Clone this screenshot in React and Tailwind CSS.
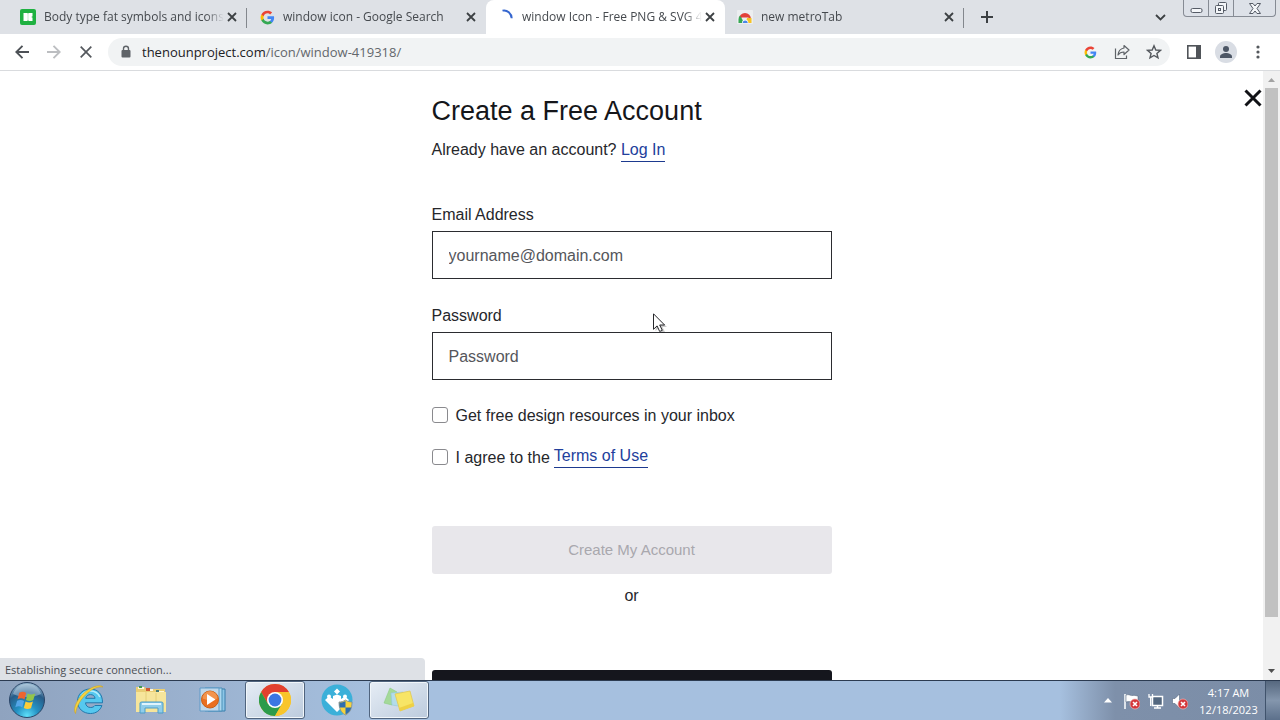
import React from "react";

const UI = "font-['Open_Sans','Noto_Sans',sans-serif]";

function GoogleG({ size }) {
  return (
    <svg width={size} height={size} viewBox="0 0 24 24" aria-hidden="true">
      <path fill="#4285F4" d="M22.56 12.25c0-.78-.07-1.53-.2-2.25H12v4.26h5.92c-.26 1.37-1.04 2.53-2.21 3.31v2.77h3.57c2.08-1.92 3.28-4.74 3.28-8.09z" />
      <path fill="#34A853" d="M12 23c2.97 0 5.46-.98 7.28-2.66l-3.57-2.77c-.98.66-2.23 1.06-3.71 1.06-2.86 0-5.29-1.93-6.16-4.53H2.18v2.84C3.99 20.53 7.7 23 12 23z" />
      <path fill="#FBBC05" d="M5.84 14.09c-.22-.66-.35-1.36-.35-2.09s.13-1.43.35-2.09V7.07H2.18C1.43 8.55 1 10.22 1 12s.43 3.45 1.18 4.93l3.66-2.84z" />
      <path fill="#EA4335" d="M12 5.38c1.62 0 3.06.56 4.21 1.64l3.15-3.15C17.45 2.09 14.97 1 12 1 7.7 1 3.99 3.47 2.18 7.07l3.66 2.84c.87-2.6 3.3-4.53 6.16-4.53z" />
    </svg>
  );
}

function IconsSiteIcon() {
  return (
    <svg width="16" height="16" viewBox="0 0 16 16" aria-hidden="true">
      <rect width="16" height="16" rx="2" fill="#1fb141" />
      <path fill="#fff" d="M3.500 4h4v.6h1V4h4v3.600h-.8v.8h.8V12h-4v-.8h-1v.8h-4z" />
      <path stroke="#9bdca9" strokeWidth=".6" d="M8 4.500v7" />
    </svg>
  );
}

function Spinner() {
  return (
    <svg width="16" height="16" viewBox="0 0 16 16" aria-hidden="true">
      <path d="M4.500 1.600q3.500-.8 6.300 1.700t2.900 6" fill="none" stroke="#3566cf" strokeWidth="2" />
    </svg>
  );
}

function WebStoreIcon() {
  return (
    <svg width="16" height="16" viewBox="0 0 16 16" aria-hidden="true">
      <rect width="16" height="14" y="1" rx="1" fill="#eceef0" />
      <path fill="#e3423a" d="M2 10a6 6 0 0 1 12 0l-3-1.500H5z" />
      <path fill="#36a853" d="M1.500 10.500A6 6 0 0 1 3 6.500l3.500 6V14H1.500z" />
      <path fill="#f7c325" d="M10 9h4.500v5H9z" />
      <path fill="#fff" d="M5 14a3.200 3.200 0 0 1 6.400 0z" />
      <path fill="#4a86e8" d="M5.700 14a2.500 2.500 0 0 1 5 0z" />
    </svg>
  );
}

function Tab({ icon, title, active, divider }) {
  return (
    <div
      className={
        "relative flex h-full w-[239px] min-w-0 items-center pr-[7px] pl-3 " +
        (active ? "rounded-t-lg bg-white " : "") +
        (divider ? "after:absolute after:right-0 after:top-2 after:h-5 after:w-px after:bg-[#83878d]" : "")
      }
    >
      <span className="flex w-4 shrink-0 items-center justify-center">{icon}</span>
      <button className="ml-2 min-w-0 flex-1 text-left text-[12px] leading-5 whitespace-nowrap text-[#45494e] [mask-image:linear-gradient(to_right,black_90%,transparent)]">
        {title}
      </button>
      <button aria-label={"Close " + title} className="flex size-4 shrink-0 items-center justify-center">
        <svg width="10" height="10" viewBox="0 0 10 10">
          <path d="M1 1l8 8M9 1L1 9" stroke="#3c4043" strokeWidth="1.800" />
        </svg>
      </button>
    </div>
  );
}

function WindowButtons() {
  const stroke = { fill: "#f4f6f9", stroke: "#555b66", strokeWidth: 1 };
  return (
    <div className="mr-1 flex h-[17px] rounded-b-[4px] border border-t-0 border-[#868b94] bg-[#dde1e8]">
      <button aria-label="Minimize" className="flex w-[25px] items-center justify-center border-r border-[#868b94]">
        <svg width="13" height="14" viewBox="0 0 13 14">
          <rect x="1" y="7.500" width="11" height="4" rx="1.500" {...stroke} />
        </svg>
      </button>
      <button aria-label="Restore" className="flex w-[25px] items-center justify-center border-r border-[#868b94]">
        <svg width="14" height="14" viewBox="0 0 14 14">
          <rect x="4.500" y="1.500" width="8" height="8" rx="1" {...stroke} />
          <rect x="1.500" y="4.500" width="8" height="8" rx="1" {...stroke} />
          <rect x="4.500" y="7.500" width="2" height="2" {...stroke} />
        </svg>
      </button>
      <button aria-label="Close window" className="flex w-[41px] items-center justify-center">
        <svg width="14" height="13" viewBox="0 0 14 13">
          <path d="M1.500 1.500h3.500L7 4l2-2.500h3.500L9 6.500l3.500 5H9L7 9l-2 2.500H1.500l3.500-5z" strokeLinejoin="round" {...stroke} />
        </svg>
      </button>
    </div>
  );
}

function TabStrip() {
  return (
    <div className="flex h-[34px] items-start bg-[#dee1e6] pl-2">
      <Tab icon={<IconsSiteIcon />} title="Body type fat symbols and icons" divider />
      <Tab icon={<GoogleG size={15} />} title="window icon - Google Search" />
      <Tab icon={<Spinner />} title="window Icon - Free PNG & SVG 4" active />
      <Tab icon={<WebStoreIcon />} title="new metroTab" divider />
      <button aria-label="New tab" className="ml-[11px] flex h-full w-6 items-center justify-center">
        <svg width="12" height="12" viewBox="0 0 12 12">
          <path d="M6 0v12M0 6h12" stroke="#3c4043" strokeWidth="2" />
        </svg>
      </button>
      <button aria-label="Search tabs" className="mr-[11px] ml-auto flex h-full w-6 items-center justify-center">
        <svg width="11" height="7" viewBox="0 0 11 7">
          <path d="M1 1l4.500 4.500L10 1" fill="none" stroke="#3c4043" strokeWidth="1.800" />
        </svg>
      </button>
      <WindowButtons />
    </div>
  );
}

function BarButton({ label, children }) {
  return (
    <button aria-label={label} className="flex h-7 w-8 shrink-0 items-center justify-center">
      {children}
    </button>
  );
}

function Toolbar() {
  return (
    <div className="flex h-[37px] items-center border-b border-[#d9dbde] bg-white pr-[6px] pl-[6px]">
      <BarButton label="Back">
        <svg width="14" height="14" viewBox="0 0 14 14">
          <path d="M14 7H1.500M7.500 .8L1.300 7l6.200 6.200" fill="none" stroke="#4d5156" strokeWidth="1.900" />
        </svg>
      </BarButton>
      <BarButton label="Forward">
        <svg width="14" height="14" viewBox="0 0 14 14">
          <path d="M0 7h12.500M6.500 .8L12.700 7l-6.200 6.200" fill="none" stroke="#bcbec1" strokeWidth="1.900" />
        </svg>
      </BarButton>
      <BarButton label="Stop">
        <svg width="12" height="12" viewBox="0 0 12 12">
          <path d="M.7 .7l10.600 10.600M11.300 .7L.7 11.300" stroke="#54585d" strokeWidth="1.700" />
        </svg>
      </BarButton>
      <div className="ml-[6px] flex h-7 min-w-0 flex-1 items-center rounded-full bg-[#f1f3f4] pl-3">
        <svg className="shrink-0" width="12" height="14" viewBox="0 0 12 14" aria-hidden="true">
          <rect x="1.500" y="5" width="9" height="7.500" rx="1" fill="#5f6368" />
          <path d="M3.500 5.500V3.700a2.500 2.500 0 0 1 5 0v1.800" fill="none" stroke="#5f6368" strokeWidth="1.400" />
        </svg>
        <span className="ml-[10px] min-w-0 flex-1 truncate text-[13px] leading-5 text-[#63676c]">
          <span className="text-[#202124]">thenounproject.com</span>/icon/window-419318/
        </span>
        <BarButton label="Google">
          <GoogleG size={13} />
        </BarButton>
        <BarButton label="Share">
          <svg width="16" height="16" viewBox="0 0 16 16">
            <path d="M1.500 4.500v10h11V11.500" fill="none" stroke="#5f6368" strokeWidth="1.200" />
            <path d="M10 1.500l5 4.500-5 4.500V8C7 8 5.300 9 4 11c.3-3.500 2.300-6.300 6-7z" fill="none" stroke="#5f6368" strokeWidth="1.200" strokeLinejoin="round" />
          </svg>
        </BarButton>
        <BarButton label="Bookmark">
          <svg width="16" height="16" viewBox="0 0 16 16">
            <path d="M8 1.800l1.800 4.200 4.600.4-3.500 3 1.100 4.500L8 11.500l-4 2.400 1.100-4.500-3.500-3 4.600-.4z" fill="none" stroke="#54585d" strokeWidth="1.400" />
          </svg>
        </BarButton>
      </div>
      <div className="ml-2 flex">
        <BarButton label="Side panel">
          <svg width="14" height="14" viewBox="0 0 14 14">
            <rect x=".8" y=".8" width="12.400" height="12.400" fill="none" stroke="#505459" strokeWidth="1.600" />
            <path d="M9 0h5v14H9z" fill="#505459" />
          </svg>
        </BarButton>
        <BarButton label="Profile">
          <svg className="shrink-0" width="22" height="22" viewBox="0 0 22 22">
            <circle cx="11" cy="11" r="11" fill="#d9dde4" />
            <circle cx="11" cy="8" r="3" fill="#4c5665" />
            <path d="M5 17v-1.500c0-2.300 3.500-3.500 6-3.500s6 1.200 6 3.500V17z" fill="#4c5665" />
          </svg>
        </BarButton>
        <BarButton label="Menu">
          <svg width="4" height="14" viewBox="0 0 4 14" fill="#54585d">
            <circle cx="2" cy="2" r="1.600" />
            <circle cx="2" cy="7" r="1.600" />
            <circle cx="2" cy="12" r="1.600" />
          </svg>
        </BarButton>
      </div>
    </div>
  );
}

const FIELD = "mt-1 block h-12 w-full border border-[#2b2c30] bg-white px-4 pt-[2px] text-[16px] text-[#26272b] outline-none placeholder:text-[#55565b]";
const LINK = "border-b border-[#1d3a8f] text-[#22409c]";
const CHECK = "size-4 shrink-0 appearance-none rounded-[3px] border border-[#8a8a8e] bg-white";
const CHECK_LABEL = "flex h-6 items-start gap-1 leading-[26px]";

function SignUpForm() {
  return (
    <form className="w-[400px] max-w-full shrink-0 pt-6 text-[16px] leading-6 text-[#26272b]">
      <h1 className="text-[27px] leading-8 text-[#15161a]">Create a Free Account</h1>
      <p className="mt-[11px]">
        Already have an account?{" "}
        <a href="#login" className={LINK + " pb-[3px]"}>Log In</a>
      </p>

      <label htmlFor="email" className="mt-[41px] block">Email Address</label>
      <input id="email" type="email" placeholder="yourname@domain.com" className={FIELD} />

      <label htmlFor="password" className="mt-[25px] block">Password</label>
      <input id="password" type="password" placeholder="Password" className={FIELD} />

      <div className="mt-[23px] flex items-center gap-2">
        <input id="resources" type="checkbox" className={CHECK} />
        <label htmlFor="resources" className={CHECK_LABEL}>Get free design resources in your inbox</label>
      </div>
      <div className="mt-[18px] flex items-center gap-2">
        <input id="terms" type="checkbox" className={CHECK} />
        <label htmlFor="terms" className={CHECK_LABEL}>
          I agree to the
          <a href="#terms" className={LINK + " leading-[22px]"}>Terms of Use</a>
        </label>
      </div>

      <button type="button" disabled className="mt-[57px] block h-12 w-full rounded-[3px] bg-[#e8e7eb] text-[15px] font-medium text-[#a9a8ae]">
        Create My Account
      </button>
      <p className="mt-[10px] text-center">or</p>
      <button type="button" aria-label="Continue with Google" className="mt-[62px] block h-12 w-full rounded-[3px] bg-[#15161d]" />
    </form>
  );
}

function ScrollBar() {
  return (
    <div className="flex w-[17px] shrink-0 flex-col items-center bg-[#f1f1f1]">
      <svg className="h-[17px] shrink-0" width="17" height="17" viewBox="0 0 17 17">
        <path d="M5 11l3.500-4 3.500 4z" fill="#a3a3a3" />
      </svg>
      <div className="flex w-[13px] flex-1 flex-col">
        <div className="h-[92%] bg-[#c1c1c1]" />
      </div>
      <svg className="h-[17px] shrink-0" width="17" height="17" viewBox="0 0 17 17">
        <path d="M5 6l3.500 4L12 6z" fill="#505050" />
      </svg>
    </div>
  );
}

function Page() {
  return (
    <main className="relative flex min-h-0 flex-1 overflow-hidden bg-white font-['Liberation_Sans',Arial,sans-serif]">
      <div className="relative flex min-w-0 flex-1 justify-center">
        <SignUpForm />
        <button aria-label="Close dialog" className="absolute top-[18px] right-[1px]">
          <svg width="18" height="18" viewBox="0 0 18 18">
            <path d="M1.500 1.500l15 15M16.500 1.500l-15 15" stroke="#111216" strokeWidth="3" />
          </svg>
        </button>
      </div>
      <ScrollBar />
      <div className={"absolute bottom-0 left-0 h-[22px] w-[425px] rounded-tr-[4px] bg-[#dee1e6] pl-[5px] text-[11px] leading-6 text-[#4a4e54] " + UI}>
        Establishing secure connection...
      </div>
      <svg className="absolute top-[242px] left-[653px]" width="14" height="20" viewBox="0 0 14 20" aria-hidden="true">
        <path d="M2.500 3v15l3.500-3 3 5 3-1-2.500-5H14z" fill="#000" opacity=".2" />
        <path d="M.5 .8v15.500l3.600-3.400 2.600 5.600 2.600-1.200-2.600-5.300h4.900z" fill="#fff" stroke="#26272b" />
      </svg>
    </main>
  );
}

function StartOrb() {
  return (
    <svg width="36" height="38" viewBox="0 0 36 38" aria-hidden="true">
      <defs>
        <radialGradient id="orb" cx=".5" cy=".95" r=".9">
          <stop offset="0" stopColor="#5fe0fa" />
          <stop offset=".35" stopColor="#2492c4" />
          <stop offset=".75" stopColor="#285c88" />
          <stop offset="1" stopColor="#8db0ca" />
        </radialGradient>
      </defs>
      <circle cx="18" cy="19" r="17.500" fill="url(#orb)" stroke="#2c4668" />
      <path d="M4 13C7 5 13 3 18 3s11 2 14 10c-8 4-20 4-28 0z" fill="#c9dcea" opacity=".45" />
      <path d="M10.200 11.800c2.800-1.500 4.800-1.200 7 .1l-1.700 6.500c-2.200-1.300-4.500-1.400-7-.2z" fill="#ee6530" />
      <path d="M18.600 12.600c2.700 1.300 4.800 1 7.600-.2l-1.900 6.600c-2.500 1.200-4.800 1.200-7.300-.1z" fill="#93c64a" />
      <path d="M8.100 19.700c2.600-1.200 4.800-1 7 .2l-1.800 6.500c-2.100-1.300-4.400-1.400-7-.2z" fill="#55a6e8" />
      <path d="M16.600 20.500c2.500 1.300 4.800 1.200 7.300.1L22 27.200c-2.600 1.100-4.900 1-7.200-.2z" fill="#fdcc38" />
    </svg>
  );
}

function ExplorerE() {
  return (
    <svg width="32" height="32" viewBox="0 0 32 32" aria-hidden="true">
      <path fillRule="evenodd" d="M29.500 18.800H12.500c.3 3 2.200 4.700 5.200 4.700 1.800 0 3.200-.7 4.200-2h7c-1.700 5-5.900 8-11.400 8C10 29.500 4.500 24.500 4.500 17.300S10 5 17.300 5c7.500 0 12.400 5.300 12.200 13.800zM12.700 14.300h9.400c-.4-2.300-2.100-3.700-4.600-3.700s-4.200 1.400-4.800 3.700z" fill="#56c8ef" stroke="#2179ad" strokeWidth="1" />
      <path d="M8 13c1.800-3.800 5-6 9.200-6 4.600 0 8 2.200 9.600 6" fill="none" stroke="#b5ecfc" strokeWidth="1.500" />
      <path d="M2.500 29.500C-1 25 5 12 15.500 5.500 21 2 27.500.5 30 3c-5-.8-10.500 1.700-15 5.600C7.500 15 3.500 22.500 2.500 29.500z" fill="#f5d33f" stroke="#cfa321" strokeWidth=".6" />
    </svg>
  );
}

function FolderIcon() {
  return (
    <svg width="32" height="32" viewBox="0 0 32 32" aria-hidden="true">
      <path d="M1 3h9l1 2h19v22H1z" fill="#e9cd73" />
      <path d="M3 3h6v2H3zM12 5h6v2h-6zM21 7h8v2h-8z" fill="#fff7da" />
      <path d="M4 2h3v2H4z" fill="#3f9a51" />
      <path d="M11 4h4v3h-4z" fill="#cf5a34" />
      <path d="M21 6h3v2h-3z" fill="#467b78" />
      <path d="M1 8h30v20H1z" fill="#f6e59b" />
      <path d="M11 8v12M21 9v11" stroke="#e4ce78" />
      <path d="M5 29V19q0-1 2-1h19q2 0 2 1v10h-5v-5H10v5z" fill="#8fcdea" stroke="#4d9dc8" />
      <path d="M7 20h19" stroke="#dff4fd" strokeWidth="2" />
    </svg>
  );
}

function MediaIcon() {
  return (
    <svg width="28" height="26" viewBox="0 0 28 26" aria-hidden="true">
      <path d="M9 2h17v22H9z" fill="#8dc6e7" stroke="#397fac" />
      <path d="M6 1h17v23H6z" fill="#add8ef" stroke="#4b90b8" />
      <path d="M1 1h19v23H1z" fill="#bfd7ea" stroke="#5f9bc8" />
      <circle cx="11" cy="12.500" r="8.500" fill="#ea6f20" stroke="#c95e13" />
      <path d="M3.500 11.500a7.500 7.500 0 0 1 15 0c-5 2-10 2-15 0z" fill="#f8ad6c" opacity=".6" />
      <path d="M8 7v11l8.500-5.500z" fill="#fff" />
    </svg>
  );
}

function ChromeIcon() {
  return (
    <svg width="32" height="32" viewBox="0 0 32 32" aria-hidden="true">
      <circle cx="16" cy="16" r="16" fill="#f8c52c" />
      <path d="M2.140 8A16 16 0 0 1 29.860 8H16L9 20z" fill="#e2402f" />
      <path d="M2.140 8A16 16 0 0 0 16 32l6.930-12H9.070z" fill="#2c9b4b" />
      <path d="M16 8h13.860A16 16 0 0 1 16 32l6.930-12z" fill="#f8c52c" />
      <circle cx="16" cy="16" r="8" fill="#fff" />
      <circle cx="16" cy="16" r="6.400" fill="#3b76e3" />
    </svg>
  );
}

function MetroIcon() {
  return (
    <svg width="32" height="32" viewBox="0 0 32 32" aria-hidden="true">
      <circle cx="16" cy="16" r="15.500" fill="#3bb0d9" />
      <path d="M16 4.500l3 3-3 3-3-3z" fill="#fff" />
      <path d="M4 16l4-3.500 4 2.500v-3l4-1.500 4 1.500v3l4-2.500 4 3.500-12 12z" fill="#fff" />
      <circle cx="8" cy="12.500" r="2" fill="#fff" />
      <circle cx="24" cy="12.500" r="2" fill="#fff" />
      <path d="M24.500 16c2 1.400 4 2 6.500 2 0 6-1.500 10.500-6.500 13-5-2.500-6.500-7-6.500-13 2.500 0 4.500-.6 6.500-2z" fill="#f6d33c" stroke="#7d8c99" strokeWidth=".8" />
      <path d="M24.500 17v6.500h-5.800a15 15 0 0 1-.2-5c2.300 0 4-.5 6-1.500zM24.500 23.500h5.800c-.8 3.300-2.800 5.500-5.800 7z" fill="#2f6eae" />
    </svg>
  );
}

function NotesIcon() {
  return (
    <svg width="32" height="28" viewBox="0 0 32 28" aria-hidden="true">
      <path d="M7 2l7 4-5 13-8-2z" fill="#a4d99a" stroke="#8ccc80" strokeWidth=".6" />
      <path d="M8 7l12-1 1 15-12-2z" fill="#b3dcea" stroke="#92c8dc" strokeWidth=".6" />
      <path d="M12 8l15-3 4 15-14 5z" fill="#f7e566" stroke="#dfc955" strokeWidth=".8" />
      <path d="M16 22l14-5 1 3-14 5z" fill="#efd144" />
    </svg>
  );
}

function Badge() {
  return (
    <g>
      <circle cx="12" cy="12" r="5" fill="#d4373a" stroke="#f0b4b4" strokeWidth=".7" />
      <path d="M10 10l4 4M14 10l-4 4" stroke="#fff" strokeWidth="1.600" />
    </g>
  );
}

function TaskButton({ label, open, children }) {
  return (
    <button
      aria-label={label}
      className={
        "mx-[1px] flex h-[38px] w-[60px] shrink-0 items-center justify-center " +
        (open ? "rounded-[3px] border border-[#50647e] bg-linear-to-br from-[#e6edf5] to-[#bccbdd] shadow-[inset_0_0_0_1px_#f1f6fa]" : "")
      }
    >
      {children}
    </button>
  );
}

function TaskBar() {
  return (
    <footer className="flex h-10 shrink-0 items-start border-t border-[#2c3b51] bg-linear-to-r from-[#8fa3bf] via-[#a6c0df] via-30% to-[#a6c0df]">
      <button aria-label="Start" className="mr-1 flex w-[54px] shrink-0 justify-center">
        <StartOrb />
      </button>
      <TaskButton label="Internet Explorer"><ExplorerE /></TaskButton>
      <TaskButton label="File Explorer"><FolderIcon /></TaskButton>
      <TaskButton label="Media Player"><MediaIcon /></TaskButton>
      <TaskButton label="Chrome" open><ChromeIcon /></TaskButton>
      <TaskButton label="metroTab"><MetroIcon /></TaskButton>
      <TaskButton label="Sticky Notes" open><NotesIcon /></TaskButton>
      <div className="ml-auto flex h-full items-center bg-linear-to-r from-[#a6c0df] via-[#7e90aa] via-25% to-[#7b8da7] pl-9">
        <div className="flex items-center">
          <button aria-label="Show hidden icons" className="flex w-6 justify-center">
            <svg width="8" height="5" viewBox="0 0 8 5"><path d="M0 4.500L4 0l4 4.500z" fill="#fff" /></svg>
          </button>
          <button aria-label="Action Center" className="flex w-6 justify-center">
            <svg width="16" height="18" viewBox="1 0 16 18">
              <path d="M2 2v15" stroke="#fff" strokeWidth="1.500" />
              <path d="M3 3c3-1.500 4 1.500 8 .3l4 .7v6c-4 1.500-7-1.500-12 0z" fill="#fff" stroke="#465973" strokeWidth=".5" />
              <Badge />
            </svg>
          </button>
          <button aria-label="Network" className="flex w-6 justify-center">
            <svg width="16" height="18" viewBox="1 0 16 18">
              <path d="M5.500 4.500h10v9h-10z" fill="#53677f" stroke="#fff" strokeWidth="1.500" />
              <path d="M7 16h7M10.500 14v2" stroke="#fff" strokeWidth="1.500" />
              <path d="M2 2v3h3.500V2M3.700 5v9" stroke="#fff" strokeWidth="1.300" fill="none" />
            </svg>
          </button>
          <button aria-label="Volume muted" className="flex w-6 justify-center">
            <svg width="16" height="18" viewBox="1 0 16 18">
              <path d="M1.500 6.500H4L8.500 2v14L4 11.500H1.500z" fill="#fff" stroke="#465973" strokeWidth=".5" />
              <Badge />
            </svg>
          </button>
        </div>
        <div className="w-[73px] text-center text-[11px] leading-[17px] text-white">
          <div>4:17 AM</div>
          <div>12/18/2023</div>
        </div>
        <button aria-label="Show desktop" className="h-full w-[15px] border-l border-[#40536c] bg-linear-to-b from-[#56687f] via-[#8496ad] to-[#5c708b]" />
      </div>
    </footer>
  );
}

export default function App() {
  return (
    <div className={"flex h-screen flex-col overflow-hidden " + UI}>
      <header className="shrink-0">
        <TabStrip />
        <Toolbar />
      </header>
      <Page />
      <TaskBar />
    </div>
  );
}
